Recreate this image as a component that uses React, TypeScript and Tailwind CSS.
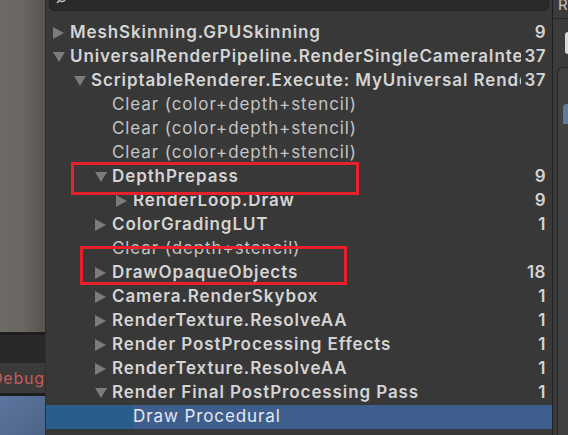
import React from "react";

interface RowData {
  level: number;
  arrow: "right" | "down" | null;
  label: string;
  count?: string;
  bold?: boolean;
  selected?: boolean;
}

const rows: RowData[] = [
  { level: 0, arrow: "right", label: "MeshSkinning.GPUSkinning", count: "9", bold: true },
  { level: 0, arrow: "down", label: "UniversalRenderPipeline.RenderSingleCameraInternal", count: "37", bold: true },
  { level: 1, arrow: "down", label: "ScriptableRenderer.Execute: MyUniversal Renderer", count: "37", bold: true },
  { level: 2, arrow: null, label: "Clear (color+depth+stencil)" },
  { level: 2, arrow: null, label: "Clear (color+depth+stencil)" },
  { level: 2, arrow: null, label: "Clear (color+depth+stencil)" },
  { level: 2, arrow: "down", label: "DepthPrepass", count: "9", bold: true },
  { level: 3, arrow: "right", label: "RenderLoop.Draw", count: "9", bold: true },
  { level: 2, arrow: "right", label: "ColorGradingLUT", count: "1", bold: true },
  { level: 2, arrow: null, label: "Clear (depth+stencil)" },
  { level: 2, arrow: "right", label: "DrawOpaqueObjects", count: "18", bold: true },
  { level: 2, arrow: "right", label: "Camera.RenderSkybox", count: "1", bold: true },
  { level: 2, arrow: "right", label: "RenderTexture.ResolveAA", count: "1", bold: true },
  { level: 2, arrow: "right", label: "Render PostProcessing Effects", count: "1", bold: true },
  { level: 2, arrow: "right", label: "RenderTexture.ResolveAA", count: "1", bold: true },
  { level: 2, arrow: "down", label: "Render Final PostProcessing Pass", count: "1", bold: true },
  { level: 3, arrow: null, label: "Draw Procedural", selected: true },
];

const indents = ["w-[7px]", "w-[28px]", "w-[49px]", "w-[70px]"];

function Arrow({ dir }: { dir: "right" | "down" | null }) {
  if (dir === "right")
    return (
      <svg width="17" height="24" viewBox="0 0 17 24">
        <path d="M0 6 L11 12 L0 18 Z" fill="#7b7b7b" />
      </svg>
    );
  if (dir === "down")
    return (
      <svg width="17" height="24" viewBox="0 0 17 24">
        <path d="M0 7 L12 7 L6 17 Z" fill="#7b7b7b" />
      </svg>
    );
  return <div className="w-[17px]" />;
}

function Row({ row }: { row: RowData }) {
  return (
    <div
      className={`flex h-[24px] items-center ${
        row.selected ? "bg-[#3e5f8d] text-[#e4e8ee]" : row.bold ? "text-[#d4d4d4]" : "text-[#c4c4c4]"
      }`}
    >
      <div className={`flex h-full shrink-0 ${row.selected ? "bg-[#2b5d8b]" : ""}`}>
        <div className={indents[row.level]} />
        <Arrow dir={row.arrow} />
      </div>
      <div
        className={`mr-[3px] min-w-0 flex-1 overflow-hidden whitespace-nowrap tracking-[0.9px] ${
          row.bold ? "font-semibold" : "font-normal"
        }`}
      >
        {row.label}
      </div>
      <div className="w-[22px] shrink-0 text-right font-semibold tracking-[0.5px]">{row.count}</div>
      <div className="w-[6px] shrink-0" />
    </div>
  );
}

export default function App() {
  return (
    <div
      className="relative flex h-[435px] w-[568px] overflow-hidden bg-[#383838] text-[17px]"
      style={{ fontFamily: "Inter, 'Noto Sans', sans-serif" }}
    >
      {/* left dock strip */}
      <div className="flex w-[46px] shrink-0 flex-col border-r border-[#2e2e2e]">
        <div className="h-[332px] bg-gradient-to-r from-[#6e6a66] via-[#6a6662] to-[#58534f]" />
        <div className="h-[31px] border-t-[3px] border-[#1e1e1e] bg-[#292929]" />
        <div className="flex h-[30px] items-center overflow-hidden bg-[#3a3a3a]">
          <span className="-ml-[9px] whitespace-nowrap text-[16px] tracking-[0.8px] text-[#c75b5b]">Debug</span>
        </div>
        <div className="flex-1 border-t-[3px] border-[#1e1e1e] bg-gradient-to-br from-[#5d76a0] to-[#4d6287]" />
      </div>

      {/* hierarchy */}
      <div className="flex w-[506px] shrink-0 flex-col">
        <div className="h-[21px] px-[3px]">
          <div className="relative -mt-[10px] h-[21px] rounded-md border border-[#222] bg-[#2a2a2a]">
            <svg className="absolute left-[6px] top-[5px]" width="12" height="12" viewBox="0 0 12 12">
              <circle cx="6" cy="2" r="3.5" fill="none" stroke="#bdbdbd" strokeWidth="1.4" />
              <path d="M3.5 4.5 L1 7" stroke="#bdbdbd" strokeWidth="1.6" />
            </svg>
          </div>
        </div>
        {rows.map((r, i) => (
          <Row key={i} row={r} />
        ))}
      </div>

      {/* right panel */}
      <div className="flex flex-1 flex-col border-l border-[#1f1f1f] bg-[#3b3b3b]">
        <div className="h-[19px] overflow-hidden border-b border-[#262626] pl-[5px]">
          <span className="-mt-[6px] block text-[15px] text-[#c4c4c4]">R</span>
        </div>
        <div className="mt-[13px] flex h-[22px] justify-end">
          <div className="w-[3px] rounded-l-sm bg-[#d9d9d9]" />
        </div>
        <div className="ml-[4px] mt-[13px] flex flex-1 flex-col rounded-tl-md border-l border-t border-[#242424] bg-[#414141] pl-[5px] pt-[36px]">
          <div className="h-[20px] rounded-tl-sm bg-[#5b7ba1]" />
        </div>
      </div>

      {/* annotation boxes */}
      <div className="pointer-events-none absolute left-[71px] top-[162px] h-[33px] w-[288px] border-[3px] border-[#e8202a]" />
      <div className="pointer-events-none absolute left-[80px] top-[246px] h-[39px] w-[267px] border-[3px] border-[#e8202a]" />
    </div>
  );
}
